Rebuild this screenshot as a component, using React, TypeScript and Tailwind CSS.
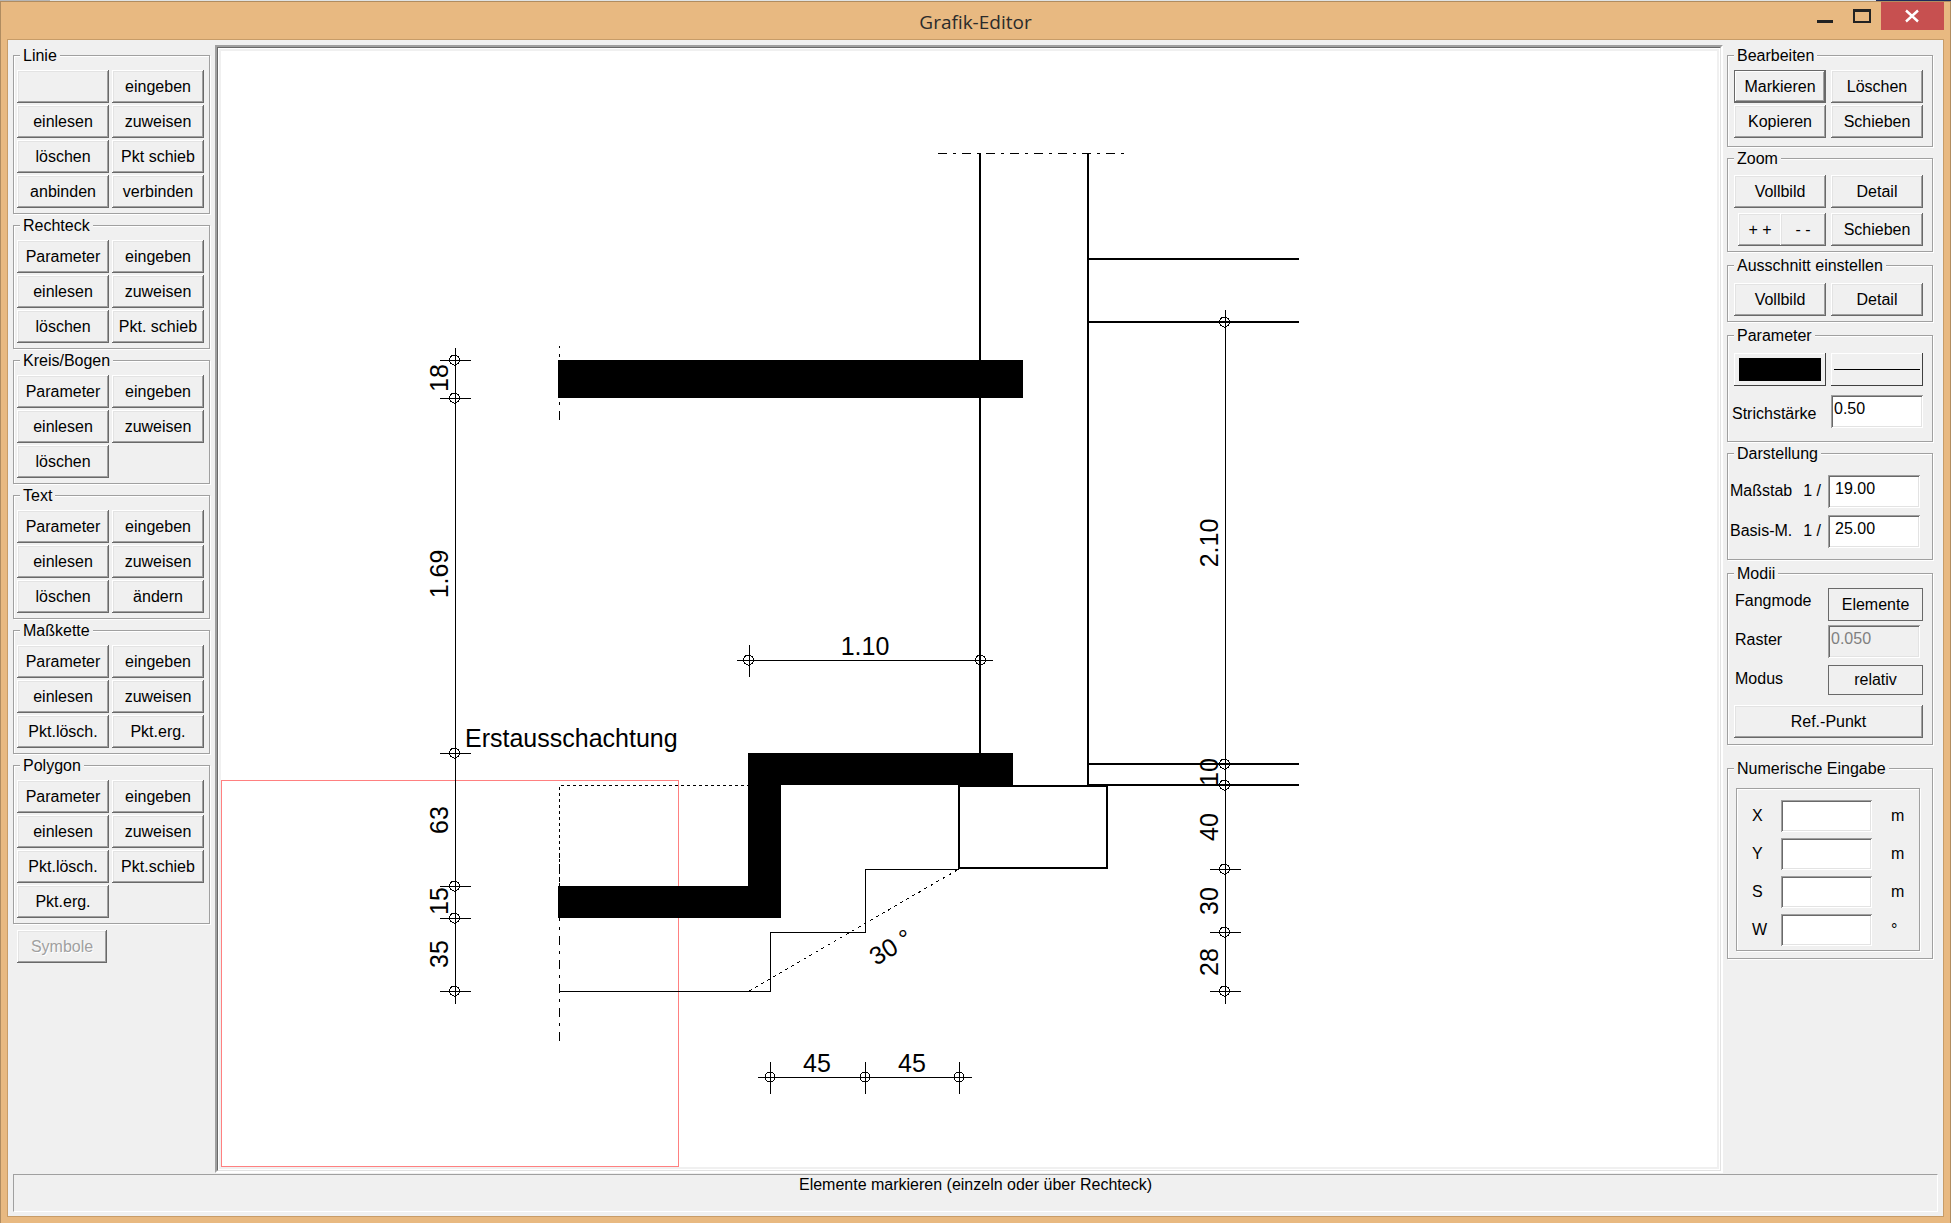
import type {ReactNode} from 'react'
import {twMerge} from 'tailwind-merge'

const raised = 'shadow-[inset_-1px_-1px_0_#696969,inset_1px_1px_0_#fff,inset_-2px_-2px_0_#a0a0a0,inset_2px_2px_0_#e3e3e3]'
const sunken = 'shadow-[inset_1px_1px_0_#a0a0a0,inset_-1px_-1px_0_#fff,inset_2px_2px_0_#696969,inset_-2px_-2px_0_#e3e3e3]'
const pressed = 'shadow-[inset_0_0_0_1px_#696969,inset_-2px_-2px_0_#696969,inset_2px_2px_0_#fff,inset_-3px_-3px_0_#a0a0a0]'
const thin = 'shadow-[inset_-1px_-1px_0_#404040,inset_1px_1px_0_#fff]'
const flat = 'border border-[#696969]'

type ToolGroup = {
    title: string
    tools: string[]
}

const toolGroups: ToolGroup[] = [
    {title: 'Linie', tools: ['', 'eingeben', 'einlesen', 'zuweisen', 'löschen', 'Pkt schieb', 'anbinden', 'verbinden']},
    {title: 'Rechteck', tools: ['Parameter', 'eingeben', 'einlesen', 'zuweisen', 'löschen', 'Pkt. schieb']},
    {title: 'Kreis/Bogen', tools: ['Parameter', 'eingeben', 'einlesen', 'zuweisen', 'löschen']},
    {title: 'Text', tools: ['Parameter', 'eingeben', 'einlesen', 'zuweisen', 'löschen', 'ändern']},
    {title: 'Maßkette', tools: ['Parameter', 'eingeben', 'einlesen', 'zuweisen', 'Pkt.lösch.', 'Pkt.erg.']},
    {title: 'Polygon', tools: ['Parameter', 'eingeben', 'einlesen', 'zuweisen', 'Pkt.lösch.', 'Pkt.schieb', 'Pkt.erg.']},
]

const coordinates = [
    {name: 'X', unit: 'm'},
    {name: 'Y', unit: 'm'},
    {name: 'S', unit: 'm'},
    {name: 'W', unit: '°'},
]

const Group = ({title, className, bodyClass, children}: {
    title: string, className?: string, bodyClass: string, children: ReactNode
}) => (
    <fieldset className={twMerge('min-w-0 border border-[#a0a0a0] shadow-[1px_1px_0_#fff,inset_1px_1px_0_#fff]', className)}>
        <legend className="ml-[6px] bg-[#f0f0f0] px-[3px] leading-[21px]">{title}</legend>
        <div className={bodyClass}>{children}</div>
    </fieldset>
)

const Button = ({children, className, look = raised, disabled, label}: {
    children?: ReactNode, className?: string, look?: string, disabled?: boolean, label?: string
}) => (
    <button
        type="button"
        disabled={disabled}
        aria-label={label}
        className={twMerge('flex h-[33px] items-center justify-center whitespace-nowrap bg-[#f0f0f0]', look,
            disabled && 'text-[#a0a0a0] [text-shadow:1px_1px_0_#fff]', className)}
    >
        {children}
    </button>
)

const Field = ({id, value, className, disabled}: {id: string, value?: string, className?: string, disabled?: boolean}) => (
    <input
        id={id}
        type="text"
        defaultValue={value}
        disabled={disabled}
        className={twMerge('h-[33px] min-w-0 pb-[6px] outline-none', sunken,
            disabled ? 'bg-[#f0f0f0] text-[#808080]' : 'bg-white', className)}
    />
)

const TitleBar = () => (
    <header className="relative flex h-[37px] items-start justify-end">
        <h1 className="absolute inset-x-0 top-[6px] text-center font-['Open_Sans',sans-serif] text-[19px] leading-[28px] text-[#2b2b2b]">
            Grafik-Editor
        </h1>
        <div className="relative flex">
            <button type="button" aria-label="Minimieren" className="h-7 w-12">
                <svg width="48" height="28" shapeRendering="crispEdges">
                    <path d="M32 18h16v3H32z" fill="#222"/>
                </svg>
            </button>
            <button type="button" aria-label="Maximieren" className="h-7 w-12">
                <svg width="48" height="28" shapeRendering="crispEdges">
                    <path d="M20 7h18v14H20zM22 10v9h14v-9z" fill="#222" fillRule="evenodd"/>
                </svg>
            </button>
            <button type="button" aria-label="Schließen" className="mr-[6px] h-7 w-[63px] bg-[#c75050]">
                <svg width="63" height="28">
                    <path d="M25 8.500l12 11M37 8.500l-12 11" stroke="#fff" strokeWidth="2.400"/>
                </svg>
            </button>
        </div>
    </header>
)

const ToolPanel = () => (
    <aside className="flex w-[197px] shrink-0 flex-col gap-px">
        {toolGroups.map(group => (
            <Group key={group.title} title={group.title} bodyClass="pt-1 pr-[5px] pb-[5px] pl-[3px]">
                <div className="grid grid-cols-2 gap-x-[3px] gap-y-[2px]">
                    {group.tools.map((tool, i) => (
                        <Button key={i} label={tool ? undefined : 'Linie Parameter'}>{tool}</Button>
                    ))}
                </div>
            </Group>
        ))}
        <Button disabled className="mt-[5px] ml-1 w-[90px]">Symbole</Button>
    </aside>
)

// dimension chains: position of the line plus the measured points on it
const leftPoints = [360, 398, 753, 886, 918, 991]
const rightPoints = [322, 764, 785, 869, 932, 991]
const bottomPoints = [770, 865, 959]

const leftLabels = [
    {y: 378, text: '18'},
    {y: 574, text: '1.69'},
    {y: 820, text: '63'},
    {y: 901, text: '15'},
    {y: 954, text: '35'},
]
const rightLabels = [
    {y: 543, text: '2.10'},
    {y: 772, text: '10'},
    {y: 827, text: '40'},
    {y: 901, text: '30'},
    {y: 962, text: '28'},
]

const Drawing = () => (
    <svg
        viewBox="221 51 1496 1116"
        preserveAspectRatio="xMinYMin meet"
        className="block h-full w-full font-['Liberation_Sans',Arial,sans-serif] text-[25px]"
        role="img"
        aria-label="Fundamentschnitt"
    >
        <g shapeRendering="crispEdges" fill="none" stroke="#000">
            {/* visible detail frame */}
            <path d="M221.500 780.500H678.500V1166.500H221.500z" stroke="#ff8080"/>

            {/* walls, floor lines and foundation */}
            <g strokeWidth="2">
                <path d="M980 153V754M1088 153V786"/>
                <path d="M1088 259H1299M1088 322H1299M1088 764H1299M1087 785H1299"/>
                <path d="M959 786H1107V868H959z"/>
            </g>

            {/* slabs */}
            <path d="M558 360H1023V398H558z" fill="#000" stroke="none"/>
            <path d="M748 753H1013V787H959V785H781V918H558V886H748z" fill="#000" stroke="none"/>

            {/* excavation */}
            <path d="M559 991.500H770.500V932.500H865.500V869.500H959"/>
            <path d="M749 991L959 869" strokeDasharray="3 4"/>
            <path d="M559.500 886V785.500H748" strokeDasharray="3 3"/>

            {/* centre lines */}
            <path d="M938 153.500H1124" strokeDasharray="9 6 3 6"/>
            <path d="M559.500 420V346" strokeDasharray="9 6 3 6"/>
            <path d="M559.500 1041V855" strokeDasharray="9 6 3 6"/>

            {/* dimension lines */}
            <path d="M455.500 348V1004M1225.500 310V1004M737 660.500H993M758 1077.500H972M749.500 645V677"/>
            {leftPoints.map(y => <path key={y} d={`M440 ${y + 0.5}H471`}/>)}
            {rightPoints.slice(3).map(y => <path key={y} d={`M1210 ${y + 0.5}H1241`}/>)}
            {bottomPoints.map(x => <path key={x} d={`M${x + 0.5} 1062V1094`}/>)}
            {leftPoints.map(y => <circle key={y} cx="454.500" cy={y} r="5"/>)}
            {rightPoints.map(y => <circle key={y} cx="1224.500" cy={y} r="5"/>)}
            {bottomPoints.map(x => <circle key={x} cx={x} cy="1077" r="5"/>)}
            <circle cx="748.500" cy="660" r="5"/>
            <circle cx="980.500" cy="660" r="5"/>
        </g>

        <text x="465" y="747">Erstausschachtung</text>
        <g textAnchor="middle">
            <text x="865" y="655">1.10</text>
            <text x="817" y="1072">45</text>
            <text x="912" y="1072">45</text>
            {leftLabels.map(l => <text key={l.text} transform={`translate(448 ${l.y}) rotate(-90)`}>{l.text}</text>)}
            {rightLabels.map(l => <text key={l.text} transform={`translate(1218 ${l.y}) rotate(-90)`}>{l.text}</text>)}
        </g>
        <text transform="translate(876 966) rotate(-31)">30 °</text>
    </svg>
)

const Canvas = () => (
    <main className="min-w-0 flex-1 border-2 border-t-[#a0a0a0] border-r-white border-b-white border-l-[#a0a0a0]">
        <div className="h-full border border-t-[#696969] border-r-[#e3e3e3] border-b-[#e3e3e3] border-l-[#696969] bg-white p-px">
            <div className="h-full border-2 border-[#f0f0f0]">
                <Drawing/>
            </div>
        </div>
    </main>
)

const SettingsPanel = () => (
    <aside className="mr-[5px] ml-1 flex w-[206px] shrink-0 flex-col">
        <Group title="Bearbeiten" bodyClass="px-[6px] pt-1 pb-2">
            <div className="mr-[3px] grid grid-cols-2 gap-x-[5px] gap-y-[2px]">
                <Button look={pressed}>Markieren</Button>
                <Button>Löschen</Button>
                <Button>Kopieren</Button>
                <Button>Schieben</Button>
            </div>
        </Group>

        <Group title="Zoom" className="mt-px" bodyClass="px-[6px] pt-[6px] pb-[5px]">
            <div className="mr-[3px] grid grid-cols-2 gap-[5px]">
                <Button>Vollbild</Button>
                <Button>Detail</Button>
                <div className="ml-1 grid grid-cols-2">
                    <Button>+ +</Button>
                    <Button className="-ml-[2px]">- -</Button>
                </div>
                <Button>Schieben</Button>
            </div>
        </Group>

        <Group title="Ausschnitt einstellen" className="mt-[3px]" bodyClass="px-[6px] pt-[7px] pb-[5px]">
            <div className="mr-[3px] grid grid-cols-2 gap-[5px]">
                <Button>Vollbild</Button>
                <Button>Detail</Button>
            </div>
        </Group>

        <Group title="Parameter" className="mt-[3px]" bodyClass="px-[6px] pt-[7px] pb-[13px]">
            <div className="mr-[3px] grid grid-cols-2 items-center gap-x-[5px] gap-y-[9px]">
                <Button label="Farbe" look={thin}>
                    <span className="h-[23px] w-[82px] bg-black"/>
                </Button>
                <Button label="Linienart" look={thin}>
                    <span className="h-px w-[86px] bg-black"/>
                </Button>
                <label htmlFor="strichstaerke" className="-ml-[2px] pt-1">Strichstärke</label>
                <Field id="strichstaerke" value="0.50" className="pl-[3px]"/>
            </div>
        </Group>

        <Group title="Darstellung" className="mt-px" bodyClass="pt-[11px] pr-3 pb-[11px] pl-[2px]">
            <div className="grid grid-cols-[1fr_auto_92px] items-center gap-y-[7px]">
                <label htmlFor="massstab" className="pb-[2px]">Maßstab</label>
                <span className="pr-[7px] pb-[2px]">1 /</span>
                <Field id="massstab" value="19.00" className="pl-[7px]"/>
                <label htmlFor="basis" className="pb-[2px]">Basis-M.</label>
                <span className="pr-[7px] pb-[2px]">1 /</span>
                <Field id="basis" value="25.00" className="pl-[7px]"/>
            </div>
        </Group>

        <Group title="Modii" className="mt-[3px]" bodyClass="px-[6px] pt-1 pb-[6px]">
            <div className="mr-[3px] grid grid-cols-[1fr_95px]">
                <label htmlFor="fangmode" className="pt-px pl-px">Fangmode</label>
                <button id="fangmode" type="button" className="h-[33px] border border-[#696969]">Elemente</button>
                <label htmlFor="raster" className="pt-[7px] pl-px">Raster</label>
                <Field id="raster" value="0.050" disabled className="mt-1 mr-[3px] pl-[3px]"/>
                <span className="pt-[9px] pl-px">Modus</span>
                <Button look={flat} className="mt-[7px] h-[30px]">relativ</Button>
                <Button className="col-span-2 mt-[10px]">Ref.-Punkt</Button>
            </div>
        </Group>

        <Group title="Numerische Eingabe" className="mt-[13px]" bodyClass="pt-[9px] pr-3 pb-[7px] pl-2">
            <div className="grid gap-[6px] border border-[#a0a0a0] pt-[11px] pb-1 shadow-[1px_1px_0_#fff,inset_1px_1px_0_#fff]">
                {coordinates.map(({name, unit}) => (
                    <div key={name} className="grid grid-cols-[29px_91px_auto] items-center pl-[15px]">
                        <label htmlFor={`num-${name}`}>{name}</label>
                        <Field id={`num-${name}`} className="h-8 px-1"/>
                        <span className="pl-[19px]">{unit}</span>
                    </div>
                ))}
            </div>
        </Group>
    </aside>
)

export default function App() {
    return (
        <div className="flex min-h-screen flex-col bg-[#dfe3e4] font-['Liberation_Sans',Arial,sans-serif] text-[16px] leading-[24px] text-black">
            {/* edge of the window behind */}
            <div className="flex h-px justify-between">
                <div className="w-[50px] bg-[#b5b5b5]"/>
                <div className="w-[75px] bg-[#1c2a5c]"/>
            </div>
            <div className="flex flex-1 flex-col border border-[#b08c60] bg-[#e8b981]">
                <TitleBar/>
                <div className="mx-[6px] mb-[6px] flex flex-1 flex-col border border-[#c79c68] bg-[#f0f0f0] px-[5px] pt-[5px] pb-1">
                    <div className="flex flex-1">
                        <ToolPanel/>
                        <div className="w-[5px] shrink-0"/>
                        <Canvas/>
                        <SettingsPanel/>
                    </div>
                    <footer className="mt-px h-[38px] border border-t-[#a0a0a0] border-r-white border-b-white border-l-[#a0a0a0] text-center leading-[20px]">
                        Elemente markieren (einzeln oder über Rechteck)
                    </footer>
                </div>
            </div>
        </div>
    )
}
